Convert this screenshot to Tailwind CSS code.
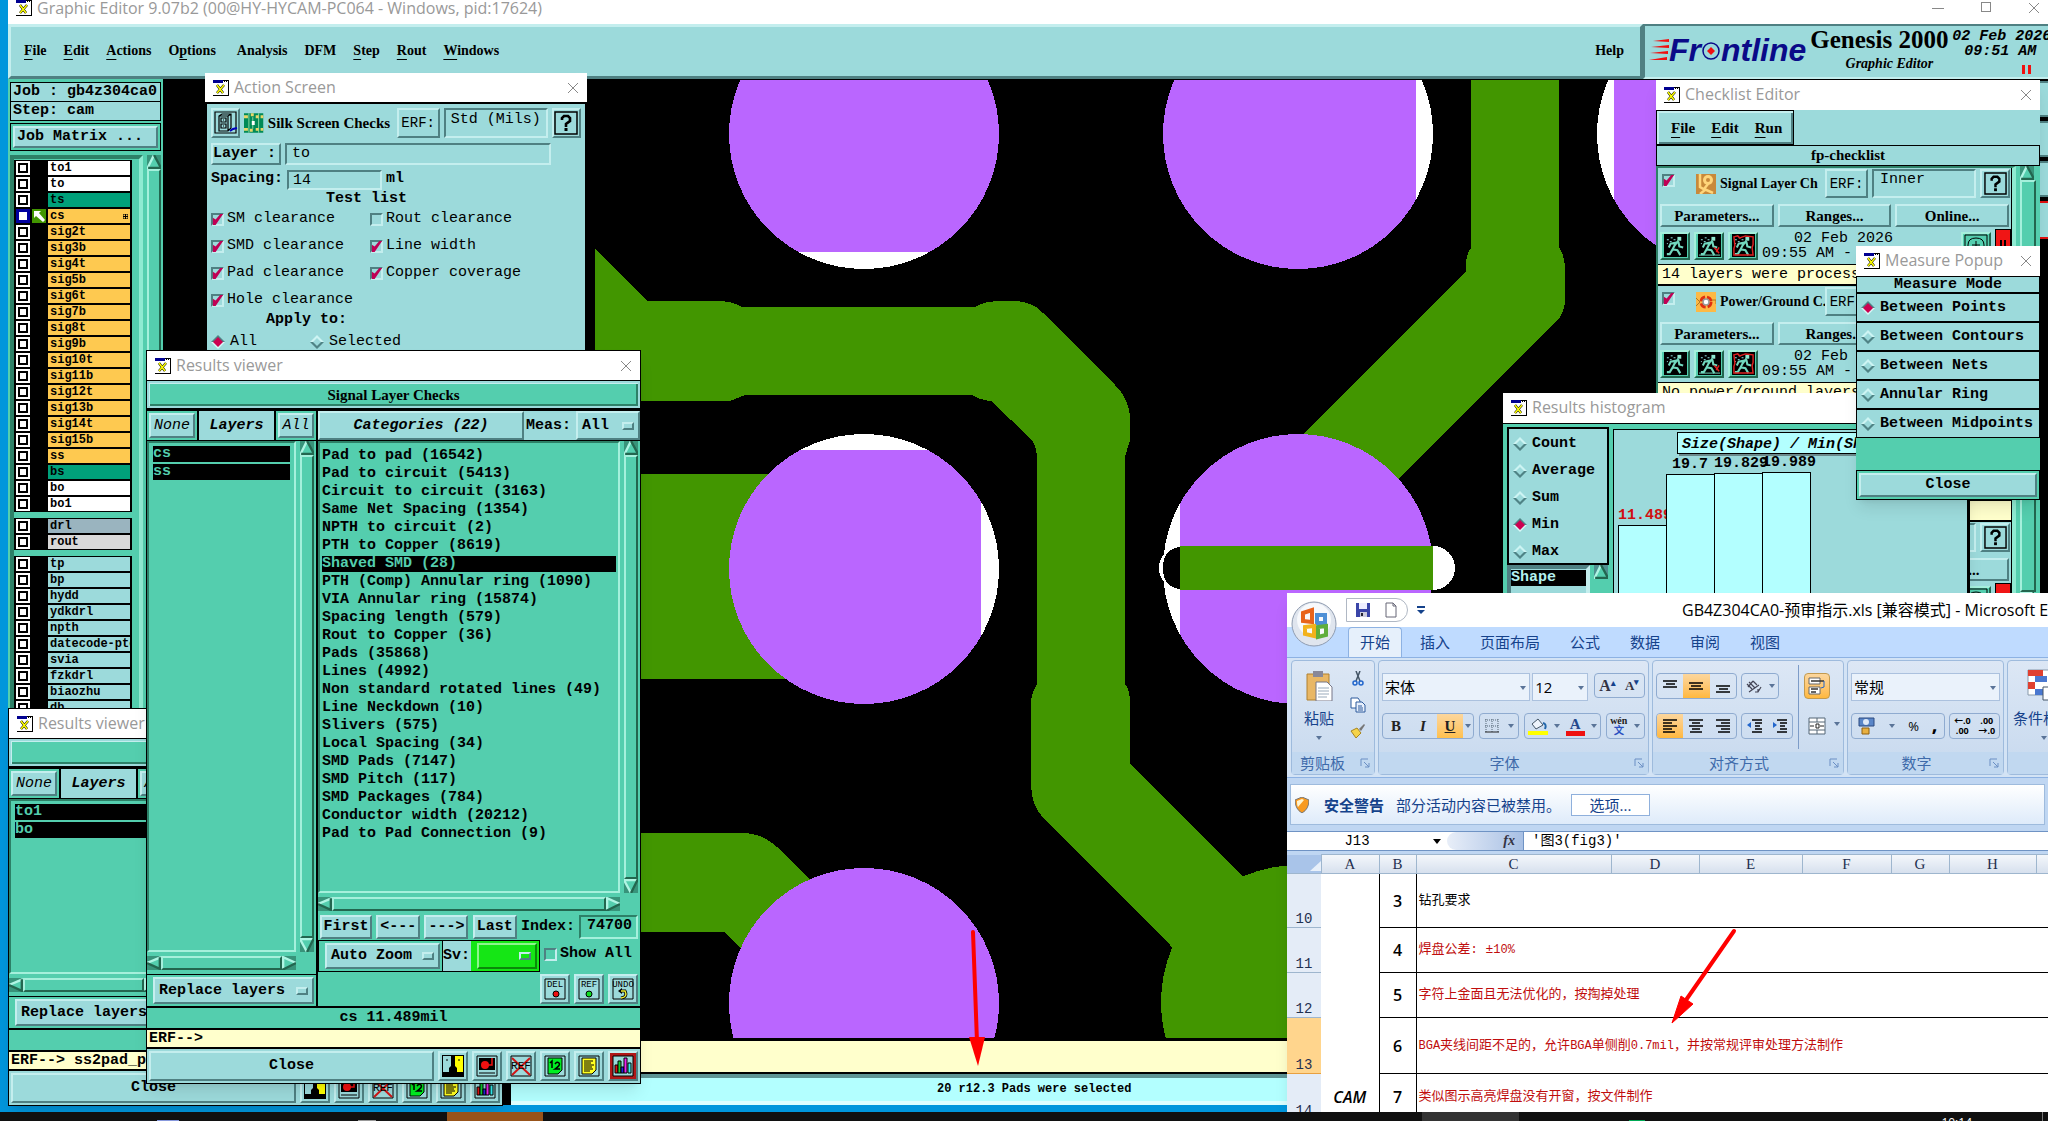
<!DOCTYPE html>
<html lang="zh-CN">
<head>
    <meta charset="UTF-8">
    <meta name="viewport" content="width=device-width, initial-scale=1.0">
    <title>Genesis 2000 - Graphic Editor</title>
    <script src="https://cdn.jsdelivr.net/npm/@tailwindcss/browser@4"></script>
</head>
<body class="relative h-screen overflow-hidden bg-[#0096dc] font-['Liberation_Mono','Noto_Sans_CJK_SC',monospace] text-[15px] leading-[18px] text-black">

    <!-- Icon sprites -->
    <svg class="hidden">
        <symbol id="xwin" viewBox="0 0 16 16"><path d="M0 0h16v16H0z" fill="#000"/><path d="M0 1h15v14H0z" fill="#fff"/><path d="M0 0h10v3H0z" fill="#000090"/><path d="M11 1h1v1h-1zM13 1h1v1h-1z" fill="#000"/><path d="M4 5l6 8M11 5l-7 8" stroke="#000" stroke-width="2.5"/><path d="M4 5l6 8M11 5l-7 8" stroke="#ff0" stroke-width="1.5"/></symbol>
        <symbol id="close" viewBox="0 0 12 12"><path d="M1 1l10 10M11 1L1 11" stroke="#888" fill="none"/></symbol>
        <symbol id="check" viewBox="0 0 14 14"><path d="M2 5l3 2 5-6h3L5 13H2z" fill="#c00055"/></symbol>
        <symbol id="diamond" viewBox="0 0 14 14"><path d="M7 0L0 7h3l4-4 4 4h3z" fill="#cdf4f3"/><path d="M0 7l7 7 7-7h-3l-4 4-4-4z" fill="#4f8385"/></symbol>
        <symbol id="diamond-on" viewBox="0 0 14 14"><path d="M7 0L0 7h14z" fill="#4f8385"/><path d="M0 7l7 7 7-7z" fill="#d8f8f7"/><path d="M7 2l5 5-5 5-5-5z" fill="#cc0050"/></symbol>
        <symbol id="up" viewBox="0 0 12 12"><path d="M6 0L0 12h12z" fill="#54ceae"/><path d="M6 0L0 12" stroke="#b0f5e4" stroke-width="2"/><path d="M6 0l6 11H1" stroke="#23664f" stroke-width="2" fill="none"/></symbol>
        <symbol id="down" viewBox="0 0 12 12"><path d="M6 12L0 0h12z" fill="#54ceae"/><path d="M6 12L0 1h12" stroke="#b0f5e4" stroke-width="2" fill="none"/><path d="M12 0L6 12" stroke="#23664f" stroke-width="2"/></symbol>
        <symbol id="left" viewBox="0 0 12 12"><path d="M0 6l12-6v12z" fill="#54ceae"/><path d="M0 6l12-5" stroke="#b0f5e4" stroke-width="2"/><path d="M0 6l11 5V1" stroke="#23664f" stroke-width="2" fill="none"/></symbol>
        <symbol id="right" viewBox="0 0 12 12"><path d="M12 6L0 0v12z" fill="#54ceae"/><path d="M12 6L1 1v10" stroke="#b0f5e4" stroke-width="2" fill="none"/><path d="M12 6L0 12" stroke="#23664f" stroke-width="2"/></symbol>
        <symbol id="ask" viewBox="0 0 24 24"><path d="M1 1h22v22H1z" fill="none" stroke="#000" stroke-width="1.5"/><path d="M8 9V7l2-2h4l2 2v3l-4 3v3" fill="none" stroke="#000" stroke-width="2.6"/><path d="M10.500 17h3v3h-3z"/></symbol>
        <symbol id="cabinet" viewBox="0 0 24 24"><path d="M1 1h21v21H1zM5 5l3-2h9v14l-3 3H5zM5 5h9v15M14 5l3-2M7 7h5v4H7zM7 13h5v4H7zM9 9h1M9 15h1" fill="none" stroke="#000" stroke-width="1.200"/><path d="M16 20l3-2 4-1" stroke="#0000c0" stroke-width="2"/></symbol>
        <symbol id="board" viewBox="0 0 20 20"><path d="M0 0h20v20H0z" fill="#008a56"/><path d="M5 0v20M9 4v12M15 0v20" stroke="#8ad8a0"/><path d="M0 2h4v3H0zM7 0h3v3H7zM12 2h3v3h-3zM17 2h3v3h-3zM0 15h4v3H0zM6 16h3v3H6zM12 15h3v3h-3zM17 15h3v3h-3z" fill="#e8d86a"/><path d="M8 8h3v4H8z" fill="#fff"/></symbol>
        <symbol id="signal" viewBox="0 0 20 20"><path d="M0 0h20v20H0z" fill="#c8893a"/><circle cx="12" cy="6" r="5" fill="#ffd57a"/><circle cx="12" cy="6" r="2" fill="#c8893a"/><path d="M4 0v13l5 3-5 4M12 10l-4 5 9 4" stroke="#ffd57a" stroke-width="2.500" fill="none"/></symbol>
        <symbol id="power" viewBox="0 0 20 20"><path d="M0 0h20v20H0z" fill="#fdb945"/><circle cx="10" cy="10" r="5" fill="none" stroke="#e03010" stroke-width="3" stroke-dasharray="6 2"/><circle cx="10" cy="10" r="3" fill="#fff" stroke="#999" stroke-width="1.500"/><path d="M0 6l4 4-4 4M16 8h4v4" stroke="#b07820" fill="none"/></symbol>
        <symbol id="run" viewBox="0 0 24 24"><path d="M0 0h24v24H0z" fill="#000"/><path d="M14 3h4v4h-4z" fill="#8fe8d0"/><path d="M15 7l-4 5-2 4 5 1 3 5M13 9L7 10l-2 4M15 8l1 5 4 1M9 16l-3 5H3" stroke="#72d8be" stroke-width="2.200" fill="none"/><path d="M3 6h2M7 4h2M6 8h2M3 10h1M10 6h2" stroke="#9ee"/></symbol>
        <symbol id="run-step" viewBox="0 0 24 24"><use href="#run"/><path d="M17 14l5 6M22 14l-3 5" stroke="#e02020" stroke-width="1.500"/><path d="M1 22h22" stroke="#72d8be"/></symbol>
        <symbol id="run-frame" viewBox="0 0 24 24"><use href="#run"/><path d="M2 3l4-1 2 2 6-2 8 1v8l-1 3 1 8H2v-7l1-3z" fill="none" stroke="#e02020" stroke-width="1.500"/></symbol>
        <symbol id="del" viewBox="0 0 22 22"><path d="M1 1h20v20H1z" fill="none" stroke="#000"/><circle cx="12" cy="16" r="3" fill="#e11" stroke="#000"/></symbol>
        <symbol id="ref" viewBox="0 0 22 22"><path d="M1 1h20v20H1z" fill="none" stroke="#000"/><circle cx="11" cy="16" r="3" fill="#1d2" stroke="#000"/></symbol>
        <symbol id="undo" viewBox="0 0 22 22"><path d="M1 1h20v20H1z" fill="none" stroke="#000"/><path d="M9 20q7-1 4-7H9" fill="none" stroke="#000" stroke-width="3"/><path d="M6 13l4-3v6z"/><path d="M9 20q7-1 4-7H9" fill="none" stroke="#ee3" stroke-width="1.500"/></symbol>
        <symbol id="face" viewBox="0 0 22 22"><path d="M0 0h22v22H0z" fill="#000"/><path d="M1 1h8v10l-2 2v4H1z" fill="#9cdadb"/><path d="M13 1h8v16h-6v-4l-2-2z" fill="#ff0"/><path d="M5 4v2M17 4v2" stroke="#000"/></symbol>
        <symbol id="screen" viewBox="0 0 22 22"><path d="M1 1h20v20H1z" fill="#9cdadb" stroke="#000"/><path d="M3 3h16v12H3z"/><circle cx="9" cy="10" r="4" fill="#e11"/><path d="M12 10h4V3" stroke="#e11" stroke-width="1.500" fill="none"/><path d="M3 18h16" stroke="#000"/></symbol>
        <symbol id="noref" viewBox="0 0 22 22"><path d="M1 1h20v20H1z" fill="none" stroke="#000"/><path d="M2 3l18 17M20 3L2 20" stroke="#d01515" stroke-width="2"/></symbol>
        <symbol id="pages" viewBox="0 0 22 22"><path d="M1 1h20v20H1z" fill="#9cdadb" stroke="#000"/><path d="M4 3h14v12l-4 4H4z" fill="#0e2" stroke="#000"/><path d="M6 8l2-2v7M11 9q2-3 4-1t-4 6h5" stroke="#000" stroke-width="1.500" fill="none"/></symbol>
        <symbol id="note" viewBox="0 0 22 22"><path d="M1 1h20v20H1z" fill="#9cdadb" stroke="#000"/><path d="M4 3h14v12l-4 4H4z" fill="#ff2" stroke="#000"/><path d="M6 6h9M6 8h7M6 10h10M6 12h8M6 14h9M6 16h6" stroke="#000"/></symbol>
        <symbol id="bars" viewBox="0 0 22 22"><path d="M1 1h20v20H1z" fill="#9cdadb" stroke="#000"/><path d="M3 10h3v8H3z" fill="#d11" stroke="#000"/><path d="M6 6h3v12H6z" fill="#1c3" stroke="#000"/><path d="M9 12h3v6H9z" fill="#22d" stroke="#000"/><path d="M12 3h3v15h-3z" fill="#e2e" stroke="#000"/><path d="M16 8h3v10h-3z" fill="#3ee" stroke="#000"/></symbol>
        <symbol id="launcher" viewBox="0 0 10 10"><path d="M1 8V1h7M4 4l5 5M9 5v4H5" fill="none" stroke="#6b8fc4"/></symbol>
        <symbol id="drop" viewBox="0 0 6 4"><path d="M0 0h6L3 4z" fill="#5a7498"/></symbol>
    </svg>

    <!-- Main window -->
    <main class="absolute top-0 right-0 bottom-4 left-2 flex flex-col bg-black">
        <header class="flex h-6 shrink-0 items-start gap-[5px] bg-white pl-2 font-['Open_Sans','Noto_Sans',sans-serif] text-base leading-4 text-[#999]">
            <svg class="size-4"><use href="#xwin"/></svg>
            <h1 class="grow">Graphic Editor 9.07b2 (00@HY-HYCAM-PC064 - Windows, pid:17624)</h1>
            <button aria-label="Minimize" class="mt-2 mr-8 h-px w-3 bg-[#888]"></button>
            <button aria-label="Maximize" class="mt-[2px] mr-8 size-[10px] border border-[#888]"></button>
            <button aria-label="Close" class="mt-[2px] mr-2"><svg class="size-[12px]"><use href="#close"/></svg></button>
        </header>
        <div class="flex h-[55px] shrink-0 bg-[#9cdadb]">
            <nav class="flex grow items-center gap-[17px] border-[3px] bg-[#9cdadb] pb-[2px] pl-[13px] font-['Liberation_Serif',serif] text-[14px] font-bold [border-color:#c4eeee_#4f8082_#4f8082_#c4eeee]">
                <a href="#"><u class="underline-offset-4">F</u>ile</a>
                <a href="#"><u class="underline-offset-4">E</u>dit</a>
                <a href="#"><u class="underline-offset-4">A</u>ctions</a>
                <a href="#">O<u class="underline-offset-4">p</u>tions</a>
                <a href="#" class="ml-1">Analysis</a>
                <a href="#">DFM</a>
                <a href="#"><u class="underline-offset-4">S</u>tep</a>
                <a href="#"><u class="underline-offset-4">R</u>out</a>
                <a href="#"><u class="underline-offset-4">W</u>indows</a>
                <a href="#" class="mr-4 ml-auto">Help</a>
            </nav>
            <div class="flex w-[405px] items-start overflow-hidden border-2 border-r-0 pl-1 [border-color:#4f8082_#4f8082_#c4eeee_#4f8082]">
                <div class="mt-[6px] flex h-9 items-center font-['Liberation_Sans',sans-serif] text-[32px] font-bold text-[#0a0a88] italic">
                    <svg class="h-6 w-[20px]" viewBox="0 0 20 24"><path d="M4 3l16-2v3zM2 9l18-2v3zM1 15l18-2v3zM0 22l18-3v3z" fill="#f01010"/></svg>
                    Fr<svg class="size-[20px]" viewBox="0 0 20 20"><circle cx="10" cy="11" r="8" fill="none" stroke="#0a0a88" stroke-width="1.500"/><path d="M10 7l4 4-4 4-4-4z" fill="#f01010"/></svg>ntline
                </div>
                <div class="mt-[2px] ml-1 w-[138px] text-center font-['Liberation_Serif',serif] font-bold whitespace-nowrap">
                    <p class="text-[25px] leading-6">Genesis 2000</p>
                    <p class="mt-1 pl-5 text-[14px] leading-4 italic">Graphic Editor</p>
                </div>
                <div class="mt-[3px] ml-1 w-[99px] shrink-0 font-bold whitespace-nowrap italic">
                    <p class="leading-[16px]">02 Feb 2026</p>
                    <p class="pl-3 leading-[14px]">09:51 AM</p>
                    <p class="mt-[6px] mr-5 ml-auto h-[9px] w-[9px] border-x-[3px] border-[#f01010]"></p>
                </div>
            </div>
        </div>

        <div class="flex min-h-0 grow">
            <!-- Layer column -->
            <aside class="flex w-[155px] shrink-0 flex-col bg-[#54ceae] px-[2px] pt-[3px] font-bold whitespace-nowrap">
                <p class="border border-black bg-[#9cdadb] pl-[2px]">Job : gb4z304ca0</p>
                <p class="border border-t-0 border-black bg-[#9cdadb] pl-[2px]">Step: cam</p>
                <div class="mt-[2px] mb-1 border border-black p-[2px]">
                    <button class="block w-full border-2 bg-[#9cdadb] pl-[2px] text-left [border-color:#c4eeee_#4f8082_#4f8082_#c4eeee]">Job Matrix ...</button>
                </div>
                <div class="flex min-h-0 grow gap-1">
                    <div class="w-[134px] overflow-hidden border-4 [border-color:#2d8067_#8febd2_#8febd2_#2d8067]">
                        <div id="layers" class="flex w-[118px] flex-col gap-[6px] pt-px text-[12px]"></div>
                    </div>
                    <div data-scroll="v" class="flex w-[14px] flex-col"></div>
                </div>
            </aside>

            <section class="flex min-w-0 grow flex-col">
                <!-- Copper canvas -->
                <div class="flex min-h-0 grow">
                    <svg class="min-h-0 min-w-0 grow" viewBox="163 79 1877 962" preserveAspectRatio="xMinYMin slice" shape-rendering="crispEdges">
                        <defs>
                            <clipPath id="view"><path d="M595 80H2040V1038H595z"/></clipPath>
                            <clipPath id="p00"><path d="M595 0H1100V252H595z"/></clipPath>
                            <clipPath id="p01"><path d="M1100 0H1416V300H1100z"/></clipPath>
                            <clipPath id="p02"><path d="M1614 0H2040V300H1614z"/></clipPath>
                            <clipPath id="p10"><path d="M595 450H981V800H595z"/></clipPath>
                            <clipPath id="p11"><path d="M1180 400H1600V800H1180z"/></clipPath>
                        </defs>
                        <g clip-path="url(#view)">
                            <g fill="#429600">
                                <path d="M595 249L647 301H718Q732 301 742 307H975Q984 301 1002 301H1014Q1032 301 1043 313L1115 385Q1130 400 1130 420V440L1125 457V684Q1130 690 1130 704V764L1243 876L1300 960L1172 947L1041 815Q1031 804 1031 780V704Q1031 694 1037 684V457Q1036 444 1031 439L991 401Q980 400 972 395H745L730 401H595z"/>
                                <circle cx="1298" cy="1002" r="137"/>
                                <path d="M595 474H800V679H595z"/>
                                <path d="M595 833H742Q762 833 777 847L860 930L800 1008L724 932H595z"/>
                                <path d="M1471 79H1559V247Q1565 256 1565 270V300Q1565 314 1554 324L1360 517L1250 487L1466 271Q1465 256 1471 248z"/>
                            </g>
                            <g fill="#fff">
                                <circle cx="864" cy="134" r="135"/><circle cx="1298" cy="134" r="135"/><circle cx="1732" cy="134" r="135"/>
                                <circle cx="864" cy="569" r="135"/><circle cx="1298" cy="569" r="135"/>
                            </g>
                            <g fill="#ba66ff">
                                <circle cx="864" cy="134" r="135" clip-path="url(#p00)"/>
                                <circle cx="1298" cy="134" r="135" clip-path="url(#p01)"/>
                                <circle cx="1732" cy="134" r="135" clip-path="url(#p02)"/>
                                <circle cx="864" cy="569" r="135" clip-path="url(#p10)"/>
                                <circle cx="1298" cy="569" r="135" clip-path="url(#p11)"/>
                                <circle cx="864" cy="1003" r="135"/>
                            </g>
                            <rect x="1159" y="546" width="296" height="44" rx="22" fill="#fff"/>
                            <path d="M1180 547Q1163 549 1163 568T1180 589z" fill="#000"/>
                            <path d="M1180 546H1433V590H1180z" fill="#429600"/>
                        </g>
                    </svg>
                    <div class="flex w-2 shrink-0 flex-col gap-1 overflow-hidden pt-[2px]">
                        <span class="h-9 border-y-2 border-[#4f8082] bg-[#9cdadb]"></span>
                        <span class="h-9 border-y-2 border-[#4f8082] bg-[#9cdadb]"></span>
                        <span class="h-9 border-y-2 border-[#4f8082] bg-[#9cdadb]"></span>
                        <span class="h-[38px] border-y-2 border-[#e01010] bg-[#9cdadb]"></span>
                    </div>
                </div>
                <div class="h-[31px] shrink-0 bg-[#ffffcc]"></div>
                <div class="mt-[2px] flex h-[31px] shrink-0">
                    <div class="w-[348px]"></div>
                    <p class="grow border-y-4 bg-[#b3ffff] pl-[426px] text-[12px] leading-[22px] font-bold [border-color:#5d9494_#b3ffff_#dff_#dff]">20 r12.3 Pads were selected</p>
                </div>
            </section>
        </div>
    </main>

    <!-- Action Screen -->
    <section class="absolute top-[73px] left-[205px] h-[290px] w-[382px] bg-[#9cdadb] shadow-lg">
        <header data-title="Action Screen" class="flex h-[31px] items-center gap-[5px] border-b-2 border-black bg-white px-2 font-['Open_Sans','Noto_Sans',sans-serif] text-base text-[#999]"></header>
        <form class="border-x-2 border-black px-1 pt-1">
            <div class="flex items-center gap-1">
                <button type="button" aria-label="Browse" class="grid size-[30px] place-items-center border-2 [border-color:#c4eeee_#4f8082_#4f8082_#c4eeee]"><svg class="size-6"><use href="#cabinet"/></svg></button>
                <svg class="size-5"><use href="#board"/></svg>
                <span class="w-[128px] font-['Liberation_Serif',serif] font-bold whitespace-nowrap">Silk Screen Checks</span>
                <button type="button" class="h-[30px] w-11 border-2 text-[14px] [border-color:#c4eeee_#4f8082_#4f8082_#c4eeee]">ERF:</button>
                <input aria-label="ERF" value="Std (Mils)" class="h-[30px] w-[104px] border-2 pb-2 pl-[5px] [border-color:#4f8082_#c4eeee_#c4eeee_#4f8082]">
                <button type="button" aria-label="Help" class="grid size-[30px] place-items-center border-2 [border-color:#c4eeee_#4f8082_#4f8082_#c4eeee]"><svg class="size-6"><use href="#ask"/></svg></button>
            </div>
            <div class="mt-[5px] flex gap-1">
                <button type="button" class="h-[22px] w-[70px] border-2 text-left font-bold whitespace-nowrap [border-color:#c4eeee_#4f8082_#4f8082_#c4eeee]">Layer :</button>
                <input aria-label="Layer" value="to" class="h-[22px] w-[266px] border-2 pb-[2px] pl-[5px] [border-color:#4f8082_#c4eeee_#c4eeee_#4f8082]">
            </div>
            <div class="mt-[5px] flex gap-1 font-bold">
                <label for="spacing" class="w-[72px]">Spacing:</label>
                <input id="spacing" value="14" class="h-5 w-[95px] border-2 pl-1 font-normal [border-color:#4f8082_#c4eeee_#c4eeee_#4f8082]">
                <span>ml</span>
            </div>
            <p class="pl-[115px] font-bold">Test list</p>
            <div id="tests" class="grid grid-cols-[159px_1fr] gap-y-[9px] pt-[2px]"></div>
            <p class="mt-[2px] pl-[55px] font-bold">Apply to:</p>
            <div id="apply" class="mt-1 flex"></div>
        </form>
    </section>

    <!-- Checklist Editor -->
    <section class="absolute top-20 right-2 h-[520px] w-[384px] overflow-hidden bg-[#9cdadb] shadow-lg">
        <header data-title="Checklist Editor" class="flex h-[30px] items-center gap-[5px] bg-white px-2 font-['Open_Sans','Noto_Sans',sans-serif] text-base text-[#999]"></header>
        <nav class="flex h-[35px] w-[138px] items-center gap-4 border border-black pl-[14px] font-['Liberation_Serif',serif] font-bold shadow-[inset_2px_2px_#c4eeee,inset_-2px_-2px_#4f8082]">
            <a href="#"><u class="underline-offset-4">F</u>ile</a>
            <a href="#"><u class="underline-offset-4">E</u>dit</a>
            <a href="#"><u class="underline-offset-4">R</u>un</a>
        </nav>
        <p class="h-[21px] border border-black text-center font-['Liberation_Serif',serif] font-bold">fp-checklist</p>
        <div class="flex">
            <div class="h-[440px] w-[360px] overflow-hidden border-y-2 border-r-4 border-l-2 [border-color:#2d8067_#8febd2_#8febd2_#2d8067]">
                <div id="checks" class="border-r border-black"></div>
            </div>
            <div class="grow bg-[#54ceae] pl-1">
                <div data-scroll="v" class="flex h-full w-[16px] flex-col"></div>
            </div>
        </div>
    </section>

    <!-- Results histogram -->
    <section class="absolute top-[393px] right-[78px] h-[210px] w-[467px] overflow-hidden border-r-2 border-black bg-[#54ceae] shadow-lg">
        <header data-title="Results histogram" class="flex h-[31px] items-center gap-[5px] border-b border-black bg-white px-2 font-['Open_Sans','Noto_Sans',sans-serif] text-base text-[#999]"></header>
        <div class="flex gap-1 pt-[3px] pl-1">
            <div class="w-[102px] font-bold">
                <div id="measures" class="flex h-[138px] flex-col gap-[9px] border-2 border-black bg-[#9cdadb] px-1 pt-[6px]"></div>
                <div class="flex gap-1">
                    <div class="h-10 w-[83px] border-4 bg-[#9cdadb] pt-px [border-color:#4f8082_#c4eeee_#c4eeee_#4f8082]"><p class="bg-black leading-4 text-[#b4f0f0]">Shape</p></div>
                    <svg class="size-[14px] bg-[#4f9090]"><use href="#up"/></svg>
                </div>
            </div>
            <div class="mt-[2px] grow border border-black bg-[#9cdadb] pl-1">
                <p class="mt-[2px] ml-[59px] h-[22px] w-[240px] border border-black bg-[#b3ffff] pl-1 leading-6 font-bold whitespace-nowrap italic shadow-[2px_2px_#6b8a8c]">Size(Shape) / Min(Shape)</p>
                <div id="histogram" class="flex items-end font-bold"></div>
            </div>
        </div>
    </section>

    <!-- Measure Popup -->
    <section class="absolute top-[246px] right-2 w-[184px] bg-[#54ceae] font-bold shadow-lg">
        <header data-title="Measure Popup" class="flex h-[30px] items-center gap-[5px] bg-white px-2 font-['Open_Sans','Noto_Sans',sans-serif] text-base font-normal text-[#999]"></header>
        <p class="h-[17px] border border-black bg-[#9cdadb] text-center leading-[15px]">Measure Mode</p>
        <div id="modes" class="flex flex-col gap-[2px] border border-black bg-black"></div>
        <div class="mt-8 border border-black p-[2px]">
            <button class="block w-full border-2 bg-[#9cdadb] leading-5 [border-color:#c4eeee_#4f8082_#4f8082_#c4eeee]">Close</button>
        </div>
    </section>

    <!-- Results viewers -->
    <section data-viewer="back" class="absolute top-[708px] left-2 flex h-[398px] w-[495px] flex-col border border-black bg-[#54ceae] shadow-lg"></section>
    <section data-viewer="front" class="absolute top-[350px] left-[146px] flex h-[734px] w-[495px] flex-col border border-black bg-[#54ceae] shadow-lg"></section>

    <!-- Workbook -->
    <section class="absolute top-[593px] right-0 bottom-[9px] left-[1287px] overflow-hidden bg-[#bfd6f2] font-['Open_Sans','Noto_Sans_CJK_SC',sans-serif] text-[15px] text-[#15428b] shadow-lg">
        <header class="flex h-[34px] items-center bg-white">
            <div class="ml-[59px] flex h-6 w-[62px] items-center gap-3 rounded-r-full border border-[#b0b8c4] pl-2">
                <button aria-label="Save"><svg class="size-4" viewBox="0 0 16 16"><path d="M1 1h14v14H1z" fill="#3a45a8"/><path d="M4 1h8v6H4z" fill="#eef"/><path d="M5 10h7v5H5z" fill="#ccd"/><path d="M6 11h2v3H6z" fill="#223"/></svg></button>
                <button aria-label="New"><svg class="size-4" viewBox="0 0 16 16"><path d="M3 1h7l3 3v11H3z" fill="#fff" stroke="#667"/><path d="M10 1v3h3" fill="none" stroke="#667"/></svg></button>
            </div>
            <svg class="ml-[9px] size-2" viewBox="0 0 8 8"><path d="M0 0h8v2H0zM0 4h8L4 8z" fill="#15428b"/></svg>
            <h2 class="ml-auto w-[366px] overflow-hidden text-base whitespace-pre text-black">GB4Z304CA0-预审指示.xls [兼容模式] - Microsoft Excel</h2>
        </header>
        <svg class="absolute top-2 left-1 size-[46px]" viewBox="0 0 46 46"><circle cx="23" cy="23" r="22" fill="#dfe5ee" stroke="#8f9cb0"/><circle cx="23" cy="19" r="17" fill="#f7f9fc"/><g fill="none" stroke-width="4"><path d="M12 12l9-3v12l-9-1z" stroke="#e8641b"/><path d="M26 14h8v8h-8z" stroke="#4d8fd6"/><path d="M14 26l9-1v10l-9-2z" stroke="#f2b21c"/><path d="M27 26l8-1v9l-8 2z" stroke="#5fae3c"/></g></svg>
        <nav class="flex h-[30px] items-end gap-[30px] bg-[#bfdbff] pl-[61px] leading-[29px]">
            <a href="#" class="-mr-[12px] rounded-t border border-b-0 border-[#8db2e3] bg-[#e6f0fb] px-[11px]">开始</a>
            <a href="#">插入</a>
            <a href="#">页面布局</a>
            <a href="#">公式</a>
            <a href="#">数据</a>
            <a href="#">审阅</a>
            <a href="#">视图</a>
        </nav>
        <div class="flex h-[121px] gap-[3px] overflow-hidden border-y border-[#8db2e3] bg-[#d3e3f5] px-1 py-[2px] text-[13px]">
            <!-- 剪贴板 -->
            <div class="flex w-[84px] shrink-0 flex-col rounded border border-[#9ebbdd] bg-linear-to-b from-[#dce7f5] to-[#c7d9ee]">
                <div class="flex grow justify-between pt-[10px] pr-2 pl-[12px]">
                    <button class="flex flex-col items-center gap-2 text-[15px]"><svg class="h-[30px] w-7" viewBox="0 0 28 30"><path d="M2 3h22v26H2z" fill="#e9b765" stroke="#b08030"/><path d="M8 0h10v6H8z" fill="#889"/><path d="M11 11h11l5 5v14H11z" fill="#fff" stroke="#778"/><path d="M13 17h11M13 20h11M13 23h11M13 26h9" stroke="#9ab"/></svg><span>粘贴</span><svg class="size-[6px]"><use href="#drop"/></svg></button>
                    <div class="flex flex-col gap-[10px]">
                        <svg class="size-4" viewBox="0 0 16 16"><path d="M6 0l4 10M10 0L6 10" stroke="#456" stroke-width="1.500"/><circle cx="5" cy="12" r="2" fill="none" stroke="#26c" stroke-width="1.500"/><circle cx="11" cy="12" r="2" fill="none" stroke="#26c" stroke-width="1.500"/></svg>
                        <svg class="size-4" viewBox="0 0 16 16"><path d="M1 1h7l2 3v7H1z" fill="#fff" stroke="#2c5a9c"/><path d="M6 5h6l3 3v7H6z" fill="#e8f0fc" stroke="#2c5a9c"/><path d="M8 9h4M8 11h5M8 13h5" stroke="#2c5a9c"/></svg>
                        <svg class="size-4" viewBox="0 0 16 16"><path d="M1 8l6-3 4 5-5 5z" fill="#f5d34a" stroke="#a88520"/><path d="M9 6l5-5 1 1-4 6z" fill="#777"/></svg>
                    </div>
                </div>
                <div class="flex h-[22px] items-center justify-between bg-[#c1d8f0] px-2 text-[15px] text-[#3e6aaa]">剪贴板<svg class="-mr-1 size-[10px]"><use href="#launcher"/></svg></div>
            </div>
            <!-- 字体 -->
            <div class="flex w-[271px] shrink-0 flex-col rounded border border-[#9ebbdd] bg-linear-to-b from-[#dce7f5] to-[#c7d9ee]">
                <div class="flex grow flex-col gap-[12px] px-[3px] pt-[12px]">
                    <div class="flex h-7 gap-[2px] text-[15px] text-black">
                        <div class="relative w-[150px]"><select aria-label="字体" class="h-full w-full appearance-none border border-[#abc1de] bg-[#eaf2fb] pl-[2px]"><option>宋体</option></select><svg class="absolute top-3 right-1 size-[6px]"><use href="#drop"/></svg></div>
                        <div class="relative mr-1 w-[56px]"><select aria-label="字号" class="h-full w-full appearance-none border border-[#abc1de] bg-[#eaf2fb] pl-[2px]"><option>12</option></select><svg class="absolute top-3 right-1 size-[6px]"><use href="#drop"/></svg></div>
                        <div class="flex h-[25px] w-[52px] justify-around rounded border border-[#8fabd0] font-['Liberation_Serif',serif] font-bold text-[#334]"><button class="text-[16px] leading-5">A<sup class="text-[9px] text-[#15428b]">▴</sup></button><button class="text-[13px] leading-5">A<sup class="text-[9px] text-[#15428b]">▾</sup></button></div>
                    </div>
                    <div class="flex h-[26px] gap-[5px] font-['Liberation_Serif',serif] text-[15px] font-bold text-[#222]">
                        <div class="flex w-[94px] items-stretch overflow-hidden rounded border border-[#8fabd0]"><button class="w-[26px]">B</button><button class="w-7 italic">I</button><button class="w-[26px] bg-linear-to-b from-[#fcd69c] to-[#ffc04c] underline">U</button><span class="grid grow place-items-center"><svg class="size-[6px]"><use href="#drop"/></svg></span></div>
                        <button aria-label="边框" class="flex w-10 items-center justify-around rounded border border-[#8fabd0]"><svg class="size-[14px]" viewBox="0 0 14 14"><path d="M1 0v13M7 0v13M13 0v13M0 1h14M0 7h14" stroke="#567" stroke-dasharray="1 1"/><path d="M0 13h14" stroke="#222"/></svg><svg class="size-[6px]"><use href="#drop"/></svg></button>
                        <div class="flex w-[78px] items-center justify-around rounded border border-[#8fabd0]"><svg class="h-[18px] w-5" viewBox="0 0 20 18"><path d="M4 7l6-5 5 6-7 4z" fill="#eef4fc" stroke="#456"/><path d="M15 6q4 1 2 6" stroke="#26a" stroke-width="2" fill="none"/><path d="M0 14h20v4H0z" fill="#ff0"/></svg><svg class="size-[6px]"><use href="#drop"/></svg><span class="border-b-[5px] border-[#e11] px-1 leading-[14px] text-[#26498c]">A</span><svg class="size-[6px]"><use href="#drop"/></svg></div>
                        <button class="flex w-10 items-center justify-around rounded border border-[#8fabd0] text-[10px] leading-[10px]"><span>wén<br><span class="text-[#2a50c0]">文</span></span><svg class="size-[6px]"><use href="#drop"/></svg></button>
                    </div>
                </div>
                <div class="flex h-[22px] items-center bg-[#c1d8f0] px-1 text-[15px] text-[#3e6aaa]"><span class="grow pr-2 text-center">字体</span><svg class="size-[10px]"><use href="#launcher"/></svg></div>
            </div>
            <!-- 对齐方式 -->
            <div class="flex w-[192px] shrink-0 flex-col rounded border border-[#9ebbdd] bg-linear-to-b from-[#dce7f5] to-[#c7d9ee]">
                <div class="flex grow gap-[5px] px-[3px] pt-[12px]">
                    <div class="flex flex-col gap-[14px]">
                        <div class="flex gap-1">
                            <div class="flex h-[26px] w-[81px] overflow-hidden rounded border border-[#8fabd0]">
                                <button aria-label="顶端对齐" class="grid w-[27px] place-items-center"><svg class="size-4" viewBox="0 0 16 16"><path d="M1 3h14M4 6h9M1 9h14" stroke="#000" stroke-width="1.500"/></svg></button>
                                <button aria-label="垂直居中" class="grid w-[27px] place-items-center bg-linear-to-b from-[#fcd69c] to-[#ffb83c]"><svg class="size-4" viewBox="0 0 16 16"><path d="M1 5h14M3 8h10M1 11h14" stroke="#000" stroke-width="1.500"/></svg></button>
                                <button aria-label="底端对齐" class="grid w-[27px] place-items-center"><svg class="size-4" viewBox="0 0 16 16"><path d="M1 8h14M4 11h9M1 14h14" stroke="#000" stroke-width="1.500"/></svg></button>
                            </div>
                            <button aria-label="方向" class="flex w-[38px] items-center justify-around rounded border border-[#8fabd0]"><svg class="size-4" viewBox="0 0 16 16"><path d="M1 6l5 5M3 4l6 6M7 3l4 4M2 9l5-6M3 14L13 7M9 14h3l3-5M12 14v-3" stroke="#445" stroke-width="1.200" fill="none"/></svg><svg class="size-[6px]"><use href="#drop"/></svg></button>
                        </div>
                        <div class="flex gap-1">
                            <div class="flex h-[26px] w-[81px] overflow-hidden rounded border border-[#8fabd0]">
                                <button aria-label="左对齐" class="grid w-[27px] place-items-center bg-linear-to-b from-[#fcd69c] to-[#ffb83c]"><svg class="size-4" viewBox="0 0 16 16"><path d="M1 2h14M1 5h9M1 8h14M1 11h9M1 14h12" stroke="#000" stroke-width="1.500"/></svg></button>
                                <button aria-label="居中" class="grid w-[27px] place-items-center"><svg class="size-4" viewBox="0 0 16 16"><path d="M1 2h14M4 5h8M1 8h14M4 11h8M2 14h12" stroke="#000" stroke-width="1.500"/></svg></button>
                                <button aria-label="右对齐" class="grid w-[27px] place-items-center"><svg class="size-4" viewBox="0 0 16 16"><path d="M1 2h14M6 5h9M1 8h14M6 11h9M3 14h12" stroke="#000" stroke-width="1.500"/></svg></button>
                            </div>
                            <div class="flex w-[52px] items-center justify-around rounded border border-[#8fabd0]">
                                <svg class="size-4" viewBox="0 0 16 16"><path d="M5 2h10M8 5h7M8 8h5M8 11h7M5 14h10" stroke="#000" stroke-width="1.500"/><path d="M0 7l4-3v6z" fill="#26c"/></svg>
                                <svg class="size-4" viewBox="0 0 16 16"><path d="M5 2h10M8 5h7M8 8h5M8 11h7M5 14h10" stroke="#000" stroke-width="1.500"/><path d="M5 7L1 4v6z" fill="#26c"/></svg>
                            </div>
                        </div>
                    </div>
                    <div class="-mt-2 h-[84px] border-l border-[#7d9cc8]"></div>
                    <div class="flex flex-col gap-[14px]">
                        <button aria-label="自动换行" class="grid size-[26px] place-items-center rounded border border-[#c29a50] bg-linear-to-b from-[#fcd69c] to-[#ffb83c]"><svg class="size-5" viewBox="0 0 20 20"><path d="M2 2h11v6H2zM2 11h11v7H2z" fill="#fff" stroke="#666"/><path d="M4 5h13M4 13h7M4 16h5" stroke="#333" stroke-width="1.500"/><path d="M17 5v6l-3 1" stroke="#26c" fill="none"/></svg></button>
                        <button aria-label="合并" class="flex items-center gap-2 pl-1"><svg class="mt-1 size-[18px]" viewBox="0 0 18 18"><path d="M1 1h16v16H1zM1 5h16M1 13h16M9 1v4M9 13v4" fill="#fff" stroke="#567"/><path d="M2 9h4M12 9h4M8 7h3v4H8z" stroke="#222" fill="none"/></svg><svg class="size-[6px]"><use href="#drop"/></svg></button>
                    </div>
                </div>
                <div class="flex h-[22px] items-center bg-[#c1d8f0] px-1 text-[15px] text-[#3e6aaa]"><span class="grow pr-2 text-center">对齐方式</span><svg class="size-[10px]"><use href="#launcher"/></svg></div>
            </div>
            <!-- 数字 -->
            <div class="flex w-[157px] shrink-0 flex-col rounded border border-[#9ebbdd] bg-linear-to-b from-[#dce7f5] to-[#c7d9ee]">
                <div class="flex grow flex-col gap-[12px] px-[3px] pt-[12px]">
                    <div class="relative h-7"><select aria-label="数字格式" class="h-full w-full appearance-none border border-[#abc1de] bg-[#eaf2fb] pl-[2px] text-[15px] text-black"><option>常规</option></select><svg class="absolute top-3 right-1 size-[6px]"><use href="#drop"/></svg></div>
                    <div class="flex h-[26px] gap-1 text-black">
                        <div class="flex w-[94px] items-center justify-around rounded border border-[#8fabd0]"><svg class="size-[18px]" viewBox="0 0 18 18"><path d="M1 1h15v8H1z" fill="#5a86c8" stroke="#2c4a80"/><circle cx="8" cy="5" r="3" fill="#dfe9f8"/><path d="M4 11h7v6H4z" fill="#e8b040" stroke="#906010"/></svg><svg class="size-[6px]"><use href="#drop"/></svg><button>%</button><button class="pb-1 text-xl leading-5 font-bold">,</button></div>
                        <div class="flex grow items-center justify-around rounded border border-[#8fabd0] text-[9px] leading-[10px] font-bold"><button>←.0<br>.00</button><button>.00<br>→.0</button></div>
                    </div>
                </div>
                <div class="flex h-[22px] items-center bg-[#c1d8f0] px-1 text-[15px] text-[#3e6aaa]"><span class="grow pr-2 text-center">数字</span><svg class="size-[10px]"><use href="#launcher"/></svg></div>
            </div>
            <div class="flex w-40 shrink-0 flex-col rounded border border-[#9ebbdd] bg-linear-to-b from-[#dce7f5] to-[#c7d9ee]">
                <button class="flex grow flex-col items-start gap-2 pt-2 pl-[5px] text-[15px]"><svg class="ml-[14px] size-8" viewBox="0 0 32 32"><path d="M1 1h28v25H1z" fill="#fff" stroke="#89a"/><path d="M1 1h7v6H1zM1 13h7v7H1zM8 1h8v6H8z" fill="#e04030"/><path d="M8 7h12v6H8zM8 20h12v6H8z" fill="#4a78d0"/><path d="M16 18h15v13H16z" fill="#fff" stroke="#456"/></svg><span>条件格式</span><svg class="ml-7 size-[6px]"><use href="#drop"/></svg></button>
                <p class="h-[22px] bg-[#c1d8f0]"></p>
            </div>
        </div>
        <div class="mx-[3px] my-[6px] flex h-[41px] items-center border border-[#9ebbdd] bg-linear-to-b from-white to-[#deebfa] pl-1">
            <svg class="h-4 w-[14px]" viewBox="0 0 14 16"><path d="M7 0l7 3q0 9-7 13Q0 12 0 3z" fill="#f89a20" stroke="#777"/><path d="M7 2L2 4q0 5 1 6l6-7z" fill="#fff4d0"/></svg>
            <strong class="ml-[15px] w-[72px]">安全警告</strong>
            <span class="w-[175px]">部分活动内容已被禁用。</span>
            <button class="h-[22px] w-[79px] border border-[#8fb0dc] bg-white leading-5">选项...</button>
        </div>
        <div class="flex h-5 border-y border-[#6f93c4] bg-white font-['Liberation_Mono','Noto_Sans_CJK_SC',monospace] text-[14px] leading-[18px] text-black">
            <span class="w-[140px] text-center">J13</span>
            <span class="grid w-5 place-items-center"><svg class="h-[5px] w-2" viewBox="0 0 8 5"><path d="M0 0h8L4 5z"/></svg></span>
            <span class="w-[76px] rounded-l-full bg-linear-to-r from-[#e8eef8] to-[#a8c0e4] pr-2 text-right font-['Liberation_Serif',serif] font-bold text-[#334] italic">fx</span>
            <input aria-label="编辑栏" value="'图3(fig3)'" class="grow border-l border-[#6f93c4] pl-2">
        </div>
        <table class="mt-[3px] w-[1000px] table-fixed border-collapse font-['Liberation_Mono','Noto_Sans_CJK_SC',monospace] text-[13px] leading-[18px] text-[#c00d0d]">
            <colgroup><col class="w-[34px]"><col class="w-[58px]"><col class="w-[37px]"><col class="w-[195px]"><col class="w-[88px]"><col class="w-[103px]"><col class="w-[89px]"><col class="w-[58px]"><col class="w-[87px]"><col></colgroup>
            <thead>
                <tr class="h-[19px] bg-linear-to-b from-[#f4f7fb] to-[#d5dfed] font-['Liberation_Serif',serif] text-[15px] leading-4 text-[#1f3050]">
                    <th class="bg-[#a9c4e9] p-0 align-bottom"><svg class="ml-auto size-3" viewBox="0 0 12 12"><path d="M12 0v10H1z" fill="#e8f0fa"/></svg></th>
                    <th class="border border-[#9eb6ce] p-0 font-normal">A</th><th class="border border-[#9eb6ce] p-0 font-normal">B</th><th class="border border-[#9eb6ce] p-0 font-normal">C</th><th class="border border-[#9eb6ce] p-0 font-normal">D</th><th class="border border-[#9eb6ce] p-0 font-normal">E</th><th class="border border-[#9eb6ce] p-0 font-normal">F</th><th class="border border-[#9eb6ce] p-0 font-normal">G</th><th class="border border-[#9eb6ce] p-0 font-normal">H</th><th class="border border-[#9eb6ce] p-0 font-normal">I</th>
                </tr>
            </thead>
            <tbody id="sheet" class="bg-white"></tbody>
        </table>
    </section>

    <!-- Annotation arrows -->
    <svg class="pointer-events-none absolute top-[920px] left-[960px] h-[150px] w-[30px]" viewBox="960 920 30 150"><path d="M973 932L977 1042" stroke="#f00" stroke-width="4" stroke-linecap="round"/><path d="M969 1037l16 0-7 29z" fill="#f00"/></svg>
    <svg class="pointer-events-none absolute top-[920px] left-[1660px] h-[110px] w-[80px]" viewBox="1660 920 80 110"><path d="M1734 931L1686 1000" stroke="#f00" stroke-width="4" stroke-linecap="round"/><path d="M1681 996l12 8-21 19z" fill="#f00" stroke="#f00" stroke-linejoin="round"/></svg>

    <!-- Taskbar -->
    <footer class="absolute inset-x-0 bottom-0 flex h-[9px] overflow-hidden bg-[#101010]">
        <span class="mt-2 ml-[157px] h-px w-[22px] bg-[#8899dd]"></span>
        <span class="mt-2 ml-[179px] h-px w-[18px] bg-[#999]"></span>
        <span class="ml-[71px] w-24 bg-[#98531a]"></span>
        <span class="ml-[879px] w-[97px] bg-[#333]"></span>
        <span class="mt-2 ml-[110px] h-px w-4 bg-[#0a5]"></span>
        <span class="mr-[70px] ml-auto pt-1 font-['Open_Sans',sans-serif] text-[12px] leading-[14px] text-white">10:14</span>
        <span class="mr-[5px] w-px bg-[#777]"></span>
    </footer>

    <script>
        const use = (id, size) => `<svg class="${size}"><use href="#${id}"/></svg>`;
        const fill = (id, html) => { document.getElementById(id).innerHTML = html; };

        // Tick box with its label
        const tick = (text, on) => `
            <label class="relative flex items-center gap-[3px] whitespace-nowrap">
                <input type="checkbox" ${on ? 'checked' : ''} class="peer size-[13px] appearance-none border-2 [border-color:#4f8082_#c4eeee_#c4eeee_#4f8082]">
                <svg class="absolute left-0 hidden size-[13px] peer-checked:block"><use href="#check"/></svg>${text}
            </label>`;

        // Diamond radio with its label
        const radio = (group, text, on) => `
            <label class="relative flex items-center gap-[5px] whitespace-nowrap">
                <input type="radio" name="${group}" ${on ? 'checked' : ''} class="size-[14px] appearance-none">
                <svg class="absolute left-0 size-[14px]"><use href="#${on ? 'diamond-on' : 'diamond'}"/></svg>${text}
            </label>`;

        const vScroll = `
            ${use('up', 'size-[14px] shrink-0 bg-[#38937a]')}
            <div class="min-h-0 grow border-2 bg-[#54ceae] [border-color:#a5f0dc_#23664f_#23664f_#a5f0dc]"></div>
            ${use('down', 'size-[14px] shrink-0 bg-[#38937a]')}`;
        const hScroll = `
            ${use('left', 'size-[14px] shrink-0 bg-[#38937a]')}
            <div class="grow border-2 bg-[#54ceae] [border-color:#a5f0dc_#23664f_#23664f_#a5f0dc]"></div>
            ${use('right', 'size-[14px] shrink-0 bg-[#38937a]')}`;

        const title = text => `
            ${use('xwin', 'size-4')}<h2 class="grow pb-[2px]">${text}</h2>
            <button aria-label="Close">${use('close', 'size-[12px]')}</button>`;

        // Layer list
        const signal = 'bg-[#fec950]', aux = 'bg-[#9cdadb]', white = 'bg-white', mask = 'bg-[#00a07a]';
        const layerGroups = [
            [['to1', white], ['to', white], ['ts', mask], ['cs', signal], ['sig2t', signal], ['sig3b', signal], ['sig4t', signal],
             ['sig5b', signal], ['sig6t', signal], ['sig7b', signal], ['sig8t', signal], ['sig9b', signal], ['sig10t', signal],
             ['sig11b', signal], ['sig12t', signal], ['sig13b', signal], ['sig14t', signal], ['sig15b', signal], ['ss', signal],
             ['bs', mask], ['bo', white], ['bo1', white]],
            [['drl', 'bg-[#9ab4bf]'], ['rout', 'bg-[#d9d9d9]']],
            [['tp', aux], ['bp', aux], ['hydd', aux], ['ydkdrl', aux], ['npth', aux], ['datecode-pto', aux], ['svia', aux],
             ['fzkdrl', aux], ['biaozhu', aux], ['db', aux]],
        ];
        fill('layers', layerGroups.map(group => `
            <div class="bg-black px-[2px]">${group.map(([name, color]) => `
                <div class="flex h-4 items-center gap-[2px]">
                    <span class="grid size-[14px] shrink-0 place-items-center ${name === 'cs' ? 'bg-[#0000a0]' : 'bg-white'}"><span class="border-2 ${name === 'cs' ? 'size-2 border-white bg-white' : 'size-[10px] border-black bg-white'}"></span></span>
                    <span class="size-[14px] shrink-0 ${name === 'cs' ? 'bg-[#429600]' : ''}">${name === 'cs' ? '<svg viewBox="0 0 14 14"><path d="M2 2h7L7 4l6 7-2 2-7-6-2 2z" fill="#fff"/></svg>' : ''}</span>
                    <span class="flex h-[14px] grow items-center justify-between overflow-hidden pl-[2px] leading-[14px] ${color}">${name}${name === 'cs' ? '<svg class="mr-[2px] size-[5px]" viewBox="0 0 5 5"><path d="M0 0h5v5H0zM0 2.500h5M2.500 0v5" fill="none" stroke="#000"/></svg>' : ''}</span>
                </div>`).join('')}
            </div>`).join(''));

        // Action Screen options
        fill('tests', [['SM clearance', 1], ['Rout clearance', 0], ['SMD clearance', 1], ['Line width', 1], ['Pad clearance', 1],
            ['Copper coverage', 1], ['Hole clearance', 1]].map(([t, on]) => tick(t, on)).join(''));
        fill('apply', `<div class="w-[99px]">${radio('apply', 'All', true)}</div>${radio('apply', 'Selected', false)}`);

        // Checklist rows
        const runs = ['run', 'run-step', 'run-frame'].map(id => `
            <button aria-label="${id}" class="grid h-7 w-[30px] place-items-center border-2 bg-[#54ceae] [border-color:#a5f0dc_#23664f_#23664f_#a5f0dc]">${use(id, 'size-[23px]')}</button>`).join('');
        const checks = [
            ['Signal Layer Ch', 'signal', 'Inner', '14 layers were processed'],
            ['Power/Ground C.', 'power', 'Inner', 'No power/ground layers'],
            ['Drill Checks', 'signal', 'Inner', ''],
            ['Solder Mask', 'power', 'Outer', ''],
        ];
        fill('checks', checks.map(([name, icon, erf, note]) => `
            <div class="h-[118px] border-b-2 border-black bg-[#9cdadb]">
                <div class="flex h-[35px] items-start gap-1 pl-1">
                    <div class="w-[30px] pt-[6px]">${tick('', true)}</div>
                    <div class="pt-[6px]">${use(icon, 'size-5')}</div>
                    <span class="mt-[6px] w-[101px] font-['Liberation_Serif',serif] text-[14px] leading-5 font-bold whitespace-nowrap">${name}</span>
                    <button class="mt-[1px] h-[29px] w-[43px] border-2 text-[14px] [border-color:#c4eeee_#4f8082_#4f8082_#c4eeee]">ERF:</button>
                    <input aria-label="ERF ${name}" value="${erf}" class="mt-[1px] h-[29px] w-[104px] border-2 pb-2 pl-[6px] [border-color:#4f8082_#c4eeee_#c4eeee_#4f8082]">
                    <button aria-label="Help" class="mt-[1px] grid h-[29px] w-[30px] place-items-center border-2 [border-color:#c4eeee_#4f8082_#4f8082_#c4eeee]">${use('ask', 'size-[23px]')}</button>
                </div>
                <div class="mt-px grid h-[23px] grid-cols-3 gap-1 px-[2px] font-['Liberation_Serif',serif] leading-[18px] font-bold">
                    <button class="border-2 [border-color:#c4eeee_#4f8082_#4f8082_#c4eeee]">Parameters...</button>
                    <button class="border-2 [border-color:#c4eeee_#4f8082_#4f8082_#c4eeee]">Ranges...</button>
                    <button class="border-2 [border-color:#c4eeee_#4f8082_#4f8082_#c4eeee]">Online...</button>
                </div>
                <div class="flex h-[37px] items-center gap-1 pl-[2px]">
                    ${runs}
                    <p class="grow text-[15px] leading-[15px]"><span class="pl-8">02 Feb 2026</span><br>09:55 AM -</p>
                    <button aria-label="View" class="grid h-7 w-[30px] place-items-center border-2 bg-[#54ceae] [border-color:#a5f0dc_#23664f_#23664f_#a5f0dc]"><svg class="size-6" viewBox="0 0 24 24"><path d="M1 1h22v22H1zM4 20v-9q0-7 8-7t8 7v9M8 11h8M12 7v8" fill="none" stroke="#000"/></svg></button>
                    <span class="grid h-[34px] w-4 place-items-center border border-black bg-[#f01515]"><span class="h-3 w-[6px] border-x-2 border-black"></span></span>
                </div>
                <p class="h-5 overflow-hidden border-t border-black bg-[#ffffcc] px-1 leading-[19px] whitespace-nowrap">${note}</p>
            </div>`).join(''));

        // Histogram
        fill('measures', ['Count', 'Average', 'Sum', 'Min', 'Max'].map(t => radio('measure', t, t === 'Min')).join(''));
        fill('histogram', [['11.489', 88], ['19.7', 139], ['19.829', 140], ['19.989', 141]].map(([label, h], i) => `
            <div class="w-12 whitespace-nowrap">
                <p class="${i ? 'text-center' : 'text-[#d01010]'}">${label}</p>
                <div class="border border-r-0 border-black bg-[#b3ffff]" style="height:${h}px"></div>
            </div>`).join('') + '<div class="h-[141px] border-l border-black"></div>');

        // Measure modes
        fill('modes', ['Between Points', 'Between Contours', 'Between Nets', 'Annular Ring', 'Between Midpoints'].map((t, i) =>
            `<div class="flex h-[27px] items-center bg-[#9cdadb] pl-1">${radio('mode', t, i === 0)}</div>`).join(''));

        // Results viewers
        const categories = ['Pad to pad (16542)', 'Pad to circuit (5413)', 'Circuit to circuit (3163)', 'Same Net Spacing (1354)',
            'NPTH to circuit (2)', 'PTH to Copper (8619)', 'Shaved SMD (28)', 'PTH (Comp) Annular ring (1090)', 'VIA Annular ring (15874)',
            'Spacing length (579)', 'Rout to Copper (36)', 'Pads (35868)', 'Lines (4992)', 'Non standard rotated lines (49)',
            'Line Neckdown (10)', 'Slivers (575)', 'Local Spacing (34)', 'SMD Pads (7147)', 'SMD Pitch (117)', 'SMD Packages (784)',
            'Conductor width (20212)', 'Pad to Pad Connection (9)'];
        const notch = '<span class="h-2 w-3 border-2 [border-color:#c4eeee_#4f8082_#4f8082_#c4eeee]"></span>';
        const tools = ['face', 'screen', 'noref', 'pages', 'note', 'bars'];

        const viewer = (front, heading, layers, status, erf) => `
            <header class="flex h-[30px] shrink-0 items-center gap-[5px] border-b border-black bg-white px-2 font-['Open_Sans','Noto_Sans',sans-serif] text-base text-[#999]">${title('Results viewer')}</header>
            <div class="h-[27px] shrink-0 border-2 border-[#9cdadb] bg-[#54ceae] text-center font-['Liberation_Serif',serif] leading-6 font-bold shadow-[inset_1px_1px_#c4eeee,inset_-2px_-2px_#2d8067]">${heading}</div>
            <div class="flex min-h-0 grow border-t-[3px] border-black font-bold whitespace-nowrap">
                <div class="flex w-[171px] shrink-0 flex-col border-r-2 border-black">
                    <div class="flex h-[30px] shrink-0 border-b border-black italic">
                        <div class="w-[50px] p-[2px]"><button class="h-full w-full border-2 bg-[#9cdadb] font-normal [border-color:#c4eeee_#4f8082_#4f8082_#c4eeee]">None</button></div>
                        <p class="grow border-x-2 border-black bg-[#9cdadb] text-center leading-[30px]">Layers</p>
                        <div class="w-10 p-[2px]"><button class="h-full w-full border-2 bg-[#9cdadb] font-normal [border-color:#c4eeee_#4f8082_#4f8082_#c4eeee]">All</button></div>
                    </div>
                    <div class="flex min-h-0 grow gap-1 pr-[2px]">
                        <div class="flex grow flex-col gap-[2px] border-2 px-1 py-[3px] [border-color:#2d8067_#a5f0dc_#a5f0dc_#2d8067]">
                            ${layers.map(l => `<p class="bg-black leading-4 text-[#54ceae]">${l}</p>`).join('')}
                        </div>
                        <div class="flex w-[14px] flex-col">${vScroll}</div>
                    </div>
                    <div class="my-1 mr-5 flex h-[14px] shrink-0">${hScroll}</div>
                    <div class="h-[32px] shrink-0 border-t border-black py-[2px] pr-[2px] pl-[6px]">
                        <button class="flex h-full w-full items-center justify-between border-2 bg-[#9cdadb] px-1 [border-color:#c4eeee_#4f8082_#4f8082_#c4eeee]">Replace layers${notch}</button>
                    </div>
                </div>
                <div class="flex min-w-0 grow flex-col">
                    <div class="flex h-[30px] shrink-0 gap-[2px] border-b border-black bg-[#9cdadb]">
                        <button class="w-[206px] border-2 italic [border-color:#c4eeee_#4f8082_#4f8082_#c4eeee]">Categories (22)</button>
                        <span class="w-[48px] leading-[30px]">Meas:</span>
                        <button class="flex grow items-center justify-between border-2 px-1 [border-color:#c4eeee_#4f8082_#4f8082_#c4eeee]">All${notch}</button>
                    </div>
                    <div class="flex min-h-0 grow gap-1">
                        <ul class="grow overflow-hidden border-2 px-[2px] pt-1 [border-color:#2d8067_#a5f0dc_#a5f0dc_#2d8067]">
                            ${categories.map((c, i) => `<li class="${i === 6 ? 'border-y border-[#54ceae] bg-black leading-4 text-[#54ceae]' : ''}">${c}</li>`).join('')}
                        </ul>
                        <div class="mr-[2px] flex w-[14px] flex-col">${vScroll}</div>
                    </div>
                    <div class="my-1 mr-5 flex h-[14px] shrink-0">${hScroll}</div>
                    <div class="flex h-6 shrink-0 items-center justify-between px-[2px]">
                        <button class="h-full w-[52px] border-2 bg-[#9cdadb] [border-color:#c4eeee_#4f8082_#4f8082_#c4eeee]">First</button>
                        <button class="h-full w-[44px] border-2 bg-[#9cdadb] [border-color:#c4eeee_#4f8082_#4f8082_#c4eeee]">&lt;---</button>
                        <button class="h-full w-[44px] border-2 bg-[#9cdadb] [border-color:#c4eeee_#4f8082_#4f8082_#c4eeee]">---&gt;</button>
                        <button class="h-full w-[44px] border-2 bg-[#9cdadb] [border-color:#c4eeee_#4f8082_#4f8082_#c4eeee]">Last</button>
                        <label class="flex h-full items-center gap-1">Index:<input value="74700" class="h-full w-[59px] border-2 bg-[#54ceae] pb-1 pl-[6px] [border-color:#2d8067_#a5f0dc_#a5f0dc_#2d8067]"></label>
                    </div>
                    <div class="mt-px flex h-8 shrink-0 items-stretch">
                        <div class="w-[125px] border border-black p-[2px] pl-[6px]"><button class="flex h-full w-full items-center justify-between border-2 bg-[#9cdadb] px-1 [border-color:#c4eeee_#4f8082_#4f8082_#c4eeee]">Auto Zoom${notch}</button></div>
                        <span class="w-7 border-y border-black bg-[#9cdadb] leading-[30px]">Sv:</span>
                        <div class="w-[69px] border border-l-0 border-black bg-[#15e615] p-[2px] pl-[6px]"><button aria-label="Severity" class="flex h-full w-full items-center justify-end border-2 pr-1 [border-color:#8df58d_#0a8a0a_#0a8a0a_#8df58d]">${notch}</button></div>
                        <div class="pt-[5px] pl-1">${tick('Show All', false)}</div>
                    </div>
                    <div class="flex h-[34px] shrink-0 items-center justify-end gap-1 pr-[2px] text-[9px]">
                        ${[['DEL', 'del'], ['REF', 'ref'], ['UNDO', 'undo']].map(([t, id]) => `
                        <button class="relative grid size-[30px] place-items-center border-2 bg-[#9cdadb] [border-color:#c4eeee_#4f8082_#4f8082_#c4eeee]">${use(id, 'size-[22px]')}<span class="absolute inset-x-0 top-1 text-center leading-[10px] font-normal">${t}</span></button>`).join('')}
                    </div>
                </div>
            </div>
            <p class="h-[22px] shrink-0 border-t-2 border-black text-center leading-5 font-bold">${status}</p>
            <p class="h-[21px] shrink-0 border-y-2 border-black bg-[#ffffcc] px-[2px] leading-[18px] font-bold whitespace-nowrap">${erf}</p>
            <div class="flex h-[34px] shrink-0 gap-1 bg-[#9cdadb] p-[2px] font-bold">
                <button class="grow border-2 [border-color:#c4eeee_#4f8082_#4f8082_#c4eeee]">Close</button>
                ${tools.map(id => `<button aria-label="${id}" class="relative grid w-[30px] place-items-center border-2 [border-color:#c4eeee_#4f8082_#4f8082_#c4eeee] ${front && id === 'bars' ? 'bg-[#b01818]' : ''}">${use(id, 'size-[22px]')}${id === 'noref' ? '<span class="absolute inset-0 text-center text-[11px] leading-[26px] font-normal">REF</span>' : ''}</button>`).join('')}
            </div>`;
        document.querySelector('[data-viewer=front]').innerHTML = viewer(true, 'Signal Layer Checks', ['cs', 'ss'], 'cs 11.489mil', 'ERF--&gt;');
        document.querySelector('[data-viewer=back]').innerHTML = viewer(false, '', ['to1', 'bo'], '', 'ERF--&gt; ss2pad_p');

        // Workbook rows, Latin runs set smaller than the Chinese text
        const rows = [
            [10, 'h-[54px]', 3, '钻孔要求'],
            [11, 'h-[45px]', 4, '焊盘公差: ±10%'],
            [12, 'h-[45px]', 5, '字符上金面且无法优化的，按掏掉处理'],
            [13, 'h-[56px]', 6, 'BGA夹线间距不足的，允许BGA单侧削0.7mil，并按常规评审处理方法制作'],
            [14, 'h-[46px]', 7, '类似图示高亮焊盘没有开窗，按文件制作'],
        ];
        const latin = text => text.replace(/[!-~]+/g, run => `<span class="text-[12px]">${run}</span>`);
        fill('sheet', rows.map(([n, h, no, text]) => `
            <tr class="${h}">
                <th class="border-y p-0 align-bottom text-[14px] leading-4 font-normal text-[#1f3050] ${n === 13 ? 'border-[#e8a040] bg-[#ffd58d]' : 'border-[#9eb6ce] bg-[#e4ecf7]'}">${n}</th>
                <td class="p-0 text-center font-['Open_Sans',sans-serif] text-base font-semibold text-black italic">${n === 14 ? 'CAM' : ''}</td>
                <td class="border border-black p-0 text-center font-['Open_Sans',sans-serif] text-base font-semibold text-black">${no}</td>
                <td colspan="7" class="border border-black py-0 pr-0 pl-[2px] whitespace-nowrap ${n === 10 ? 'text-black' : ''}">${latin(text)}</td>
            </tr>`).join(''));

        document.querySelectorAll('[data-title]').forEach(el => { el.innerHTML = title(el.dataset.title); });
        document.querySelectorAll('[data-scroll]').forEach(el => { el.innerHTML = vScroll; });
    </script>
</body>
</html>
